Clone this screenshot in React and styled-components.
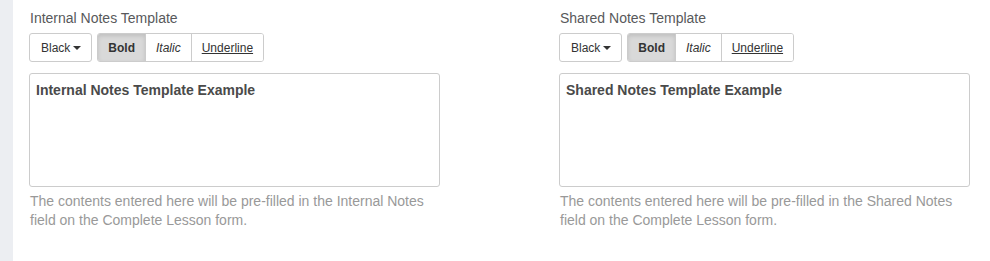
import React from 'react'
import styled, { createGlobalStyle } from 'styled-components'

const GlobalStyle = createGlobalStyle`
  html, body {
    margin: 0;
    padding: 0;
    background: #fff;
    overflow: hidden;
  }
  body {
    font-family: 'Liberation Sans', Arial, sans-serif;
    font-size: 14px;
    line-height: 20px;
    color: #555;
  }
`

const templates = [
  {
    label: 'Internal Notes Template',
    example: 'Internal Notes Template Example',
    field: 'Internal Notes',
  },
  {
    label: 'Shared Notes Template',
    example: 'Shared Notes Template Example',
    field: 'Shared Notes',
  },
]

export default function App() {
  return (
    <Page>
      <GlobalStyle />
      <Sidebar />
      <Content>
        {templates.map(t => (
          <Column key={t.label}>
            <Label>{t.label}</Label>
            <Toolbar>
              <Button>
                Black <Caret />
              </Button>
              <ButtonGroup>
                <GroupButton active>
                  <b>Bold</b>
                </GroupButton>
                <GroupButton>
                  <i>Italic</i>
                </GroupButton>
                <GroupButton>
                  <u>Underline</u>
                </GroupButton>
              </ButtonGroup>
            </Toolbar>
            <Editor>
              <EditorText>{t.example}</EditorText>
            </Editor>
            <Help>
              The contents entered here will be pre-filled in the {t.field} field on the Complete Lesson form.
            </Help>
          </Column>
        ))}
      </Content>
    </Page>
  )
}

const Page = styled.div`
  display: flex;
  width: 990px;
  min-height: 261px;
`

const Sidebar = styled.div`
  width: 13px;
  flex: none;
  background: #eceef2;
`

const Content = styled.div`
  flex: 1;
  min-width: 0;
  display: flex;
  padding: 8px 0 0 16px;
`

const Column = styled.div`
  flex: 0 0 530px;
  display: flex;
  flex-direction: column;
  &:last-child {
    flex: 1 1 auto;
  }
`

const Label = styled.div`
  color: #58595b;
  margin-bottom: 5px;
  padding-left: 1px;
`

const Toolbar = styled.div`
  display: flex;
  gap: 5px;
  margin-bottom: 11px;
`

const Button = styled.div`
  display: flex;
  align-items: center;
  height: 29px;
  box-sizing: border-box;
  padding: 0 10px 0 11px;
  border: 1px solid #ccc;
  border-radius: 3px;
  background: #fff;
  font-size: 12px;
  color: #333;
`

const Caret = styled.span`
  display: inline-block;
  width: 0;
  height: 0;
  margin-left: 3px;
  border-top: 4px solid #333;
  border-left: 4px solid transparent;
  border-right: 4px solid transparent;
`

const ButtonGroup = styled.div`
  display: flex;
  border: 1px solid #ccc;
  border-radius: 3px;
  overflow: hidden;
  height: 29px;
  box-sizing: border-box;
`

const GroupButton = styled.div`
  display: flex;
  align-items: center;
  padding: 0 10px;
  font-size: 12px;
  color: #333;
  background: ${p => (p.active ? '#d9d9d9' : '#fff')};
  box-shadow: ${p => (p.active ? 'inset 0 2px 4px rgba(0,0,0,0.12)' : 'none')};
  & + & {
    border-left: 1px solid #ccc;
  }
`

const Editor = styled.div`
  width: 411px;
  height: 114px;
  box-sizing: border-box;
  border: 1px solid #ccc;
  border-radius: 3px;
  padding: 6px 6px;
`

const EditorText = styled.div`
  font-weight: bold;
  color: #4a4a4a;
`

const Help = styled.div`
  margin-top: 5px;
  width: 411px;
  color: #999;
  line-height: 19px;
  padding-left: 1px;
`
